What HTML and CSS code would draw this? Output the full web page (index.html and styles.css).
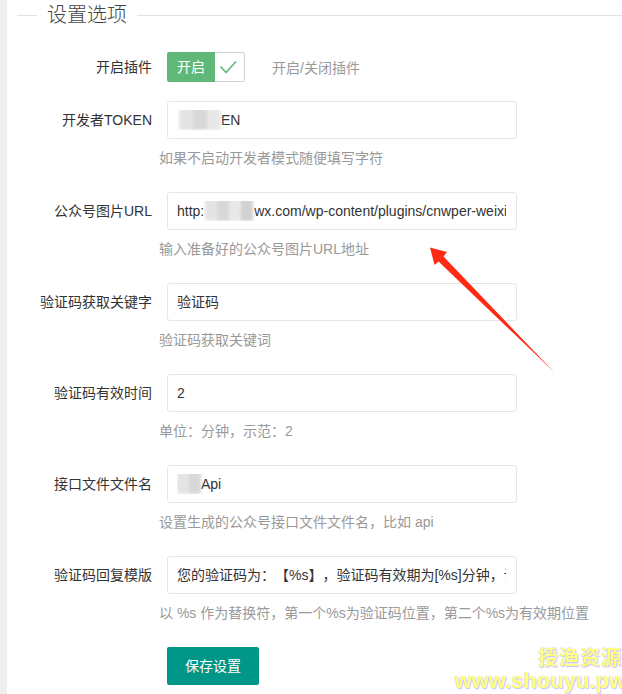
FILE: index.html
```html
<!DOCTYPE html>
<html lang="zh-CN">
<head>
<meta charset="utf-8">
<title>设置选项</title>
<link rel="stylesheet" href="styles.css">
</head>
<body>
<div class="page">
  <div class="sidebar"></div>
  <div class="main">
    <div class="legend">
      <span class="legend-line short"></span>
      <span class="legend-text">设置选项</span>
      <span class="legend-line long"></span>
    </div>
    <div class="form">
      <div class="item">
        <div class="label"><span>开启插件</span></div>
        <div class="control inline">
          <div class="switch">
            <span class="switch-on">开启</span>
            <span class="switch-check">
              <svg width="30" height="28" viewBox="0 0 30 28"><path d="M6.5 13.5 L12 19.5 L22 8.5" fill="none" stroke="#5fb878" stroke-width="1.6"/></svg>
            </span>
          </div>
          <span class="aux-inline">开启/关闭插件</span>
        </div>
      </div>

      <div class="item">
        <div class="label"><span>开发者TOKEN</span></div>
        <div class="control">
          <div class="input"><div class="val"><span class="mosaic m-token"><i></i><i></i><i></i></span>EN</div></div>
          <div class="aux">如果不启动开发者模式随便填写字符</div>
        </div>
      </div>

      <div class="item">
        <div class="label"><span>公众号图片URL</span></div>
        <div class="control">
          <div class="input"><div class="val">http:<span class="mosaic m-url"><i></i><i></i><i></i><i></i></span>wx.com/wp-content/plugins/cnwper-weixin</div></div>
          <div class="aux">输入准备好的公众号图片URL地址</div>
        </div>
      </div>

      <div class="item">
        <div class="label"><span>验证码获取关键字</span></div>
        <div class="control">
          <div class="input"><div class="val">验证码</div></div>
          <div class="aux">验证码获取关键词</div>
        </div>
      </div>

      <div class="item">
        <div class="label"><span>验证码有效时间</span></div>
        <div class="control">
          <div class="input"><div class="val">2</div></div>
          <div class="aux">单位：分钟，示范：2</div>
        </div>
      </div>

      <div class="item">
        <div class="label"><span>接口文件文件名</span></div>
        <div class="control">
          <div class="input"><div class="val"><span class="mosaic m-api"><i></i><i></i></span>Api</div></div>
          <div class="aux">设置生成的公众号接口文件文件名，比如 api</div>
        </div>
      </div>

      <div class="item">
        <div class="label"><span>验证码回复模版</span></div>
        <div class="control">
          <div class="input"><div class="val">您的验证码为：【%s】，验证码有效期为[%s]分钟，请尽快使用</div></div>
          <div class="aux">以 %s 作为替换符，第一个%s为验证码位置，第二个%s为有效期位置</div>
        </div>
      </div>

      <div class="item">
        <div class="label"></div>
        <div class="control">
          <button class="btn">保存设置</button>
        </div>
      </div>
    </div>
  </div>
</div>

<svg class="arrow" width="622" height="694" viewBox="0 0 622 694">
  <polygon points="430,247.5 447,252 443.5,256.5 554,372 438.5,261.5 434.5,265" fill="#ff2a14"/>
</svg>

<div class="watermark">
  <div class="wm-cn">授渔资源</div>
  <div class="wm-en">www.shouyu.pw</div>
</div>
</body>
</html>
```

FILE: styles.css
```css
* { box-sizing: border-box; }
html, body { margin: 0; padding: 0; }
body {
  width: 622px;
  height: 694px;
  overflow: hidden;
  background: #fff;
  font-family: "Liberation Sans", "Noto Sans CJK SC", sans-serif;
  font-size: 14px;
  color: #333;
  position: relative;
  text-spacing-trim: space-all;
}
.page {
  display: flex;
  min-height: 694px;
}
.sidebar {
  width: 7px;
  background: #eeeeee;
  flex: none;
}
.main {
  flex: 1;
  padding-left: 10px;
}
.legend {
  display: flex;
  align-items: center;
  height: 30px;
}
.legend-line {
  height: 1px;
  background: #e2e2e2;
}
.legend-line.short { width: 20px; }
.legend-line.long { flex: 1; }
.legend-text {
  padding: 0 10px;
  font-size: 20px;
  line-height: 30px;
  font-weight: 300;
  color: #444;
}
.form {
  padding-top: 18px;
  padding-left: 40px;
}
.item {
  display: flex;
  margin-bottom: 15px;
}
.label {
  width: 110px;
  flex: none;
  display: flex;
  justify-content: flex-end;
  align-items: flex-start;
  padding: 9px 15px 9px 0;
  line-height: 20px;
  color: #333;
  white-space: nowrap;
}
.label span { flex: none; }
.control {
  width: 350px;
}
.control.inline {
  width: auto;
  display: flex;
  align-items: center;
  height: 38px;
}
.switch {
  display: flex;
  height: 30px;
}
.switch-on {
  width: 48px;
  background: #5fb878;
  color: #fff;
  line-height: 30px;
  text-align: center;
  border-radius: 2px 0 0 2px;
}
.switch-check {
  width: 30px;
  height: 30px;
  border: 1px solid #d2d2d2;
  border-left: none;
  border-radius: 0 2px 2px 0;
  display: flex;
  align-items: center;
}
.switch-check svg { display: block; margin-left: -1px; }
.aux-inline {
  margin-left: 27px;
  color: #999;
}
.input {
  height: 38px;
  border: 1px solid #e6e6e6;
  border-radius: 3px;
  padding: 0 10px 0 9px;
  background: #fff;
  display: flex;
  align-items: center;
}
.val {
  overflow: hidden;
  white-space: nowrap;
  line-height: 20px;
  color: #333;
  width: 100%;
}
.aux {
  margin-left: -8px;
  padding: 9px 0;
  line-height: 20px;
  color: #999;
  white-space: nowrap;
}
.mosaic {
  display: inline-flex;
  vertical-align: middle;
  height: 22px;
  margin-top: -3px;
  filter: blur(1.5px);
}
.mosaic i {
  display: block;
  width: 12px;
  height: 22px;
  background: #e4e4e4;
}
.mosaic i:nth-child(2) { background: #d8d8d8; }
.mosaic i:nth-child(3) { background: #e8e8e8; }
.mosaic i:nth-child(4) { background: #d2d2d2; }
.m-token { width: 42px; margin-left: 2px; }
.m-token i { width: 14px; }
.m-url { width: 49px; margin-left: 1px; }
.m-api { width: 24px; }
.btn {
  height: 38px;
  padding: 0 18px;
  border: none;
  border-radius: 2px;
  background: #009688;
  color: #fff;
  font-family: inherit;
  font-size: 14px;
  line-height: 38px;
  cursor: pointer;
}
.arrow {
  position: absolute;
  left: 0;
  top: 0;
  pointer-events: none;
}
.watermark {
  position: absolute;
  right: -4px;
  top: 644px;
  text-align: right;
  font-family: "Noto Sans CJK SC", "Liberation Sans", sans-serif;
  font-weight: 700;
  color: #ffff80;
  text-shadow: 0 0 1px #b8b8ff, 1px 1px 1px #c8c0ff;
}
.wm-cn {
  font-size: 20px;
  line-height: 26px;
  letter-spacing: 1px;
  margin-right: 4px;
}
.wm-en {
  font-family: "Liberation Sans", sans-serif;
  font-size: 22px;
  line-height: 22px;
}
```
